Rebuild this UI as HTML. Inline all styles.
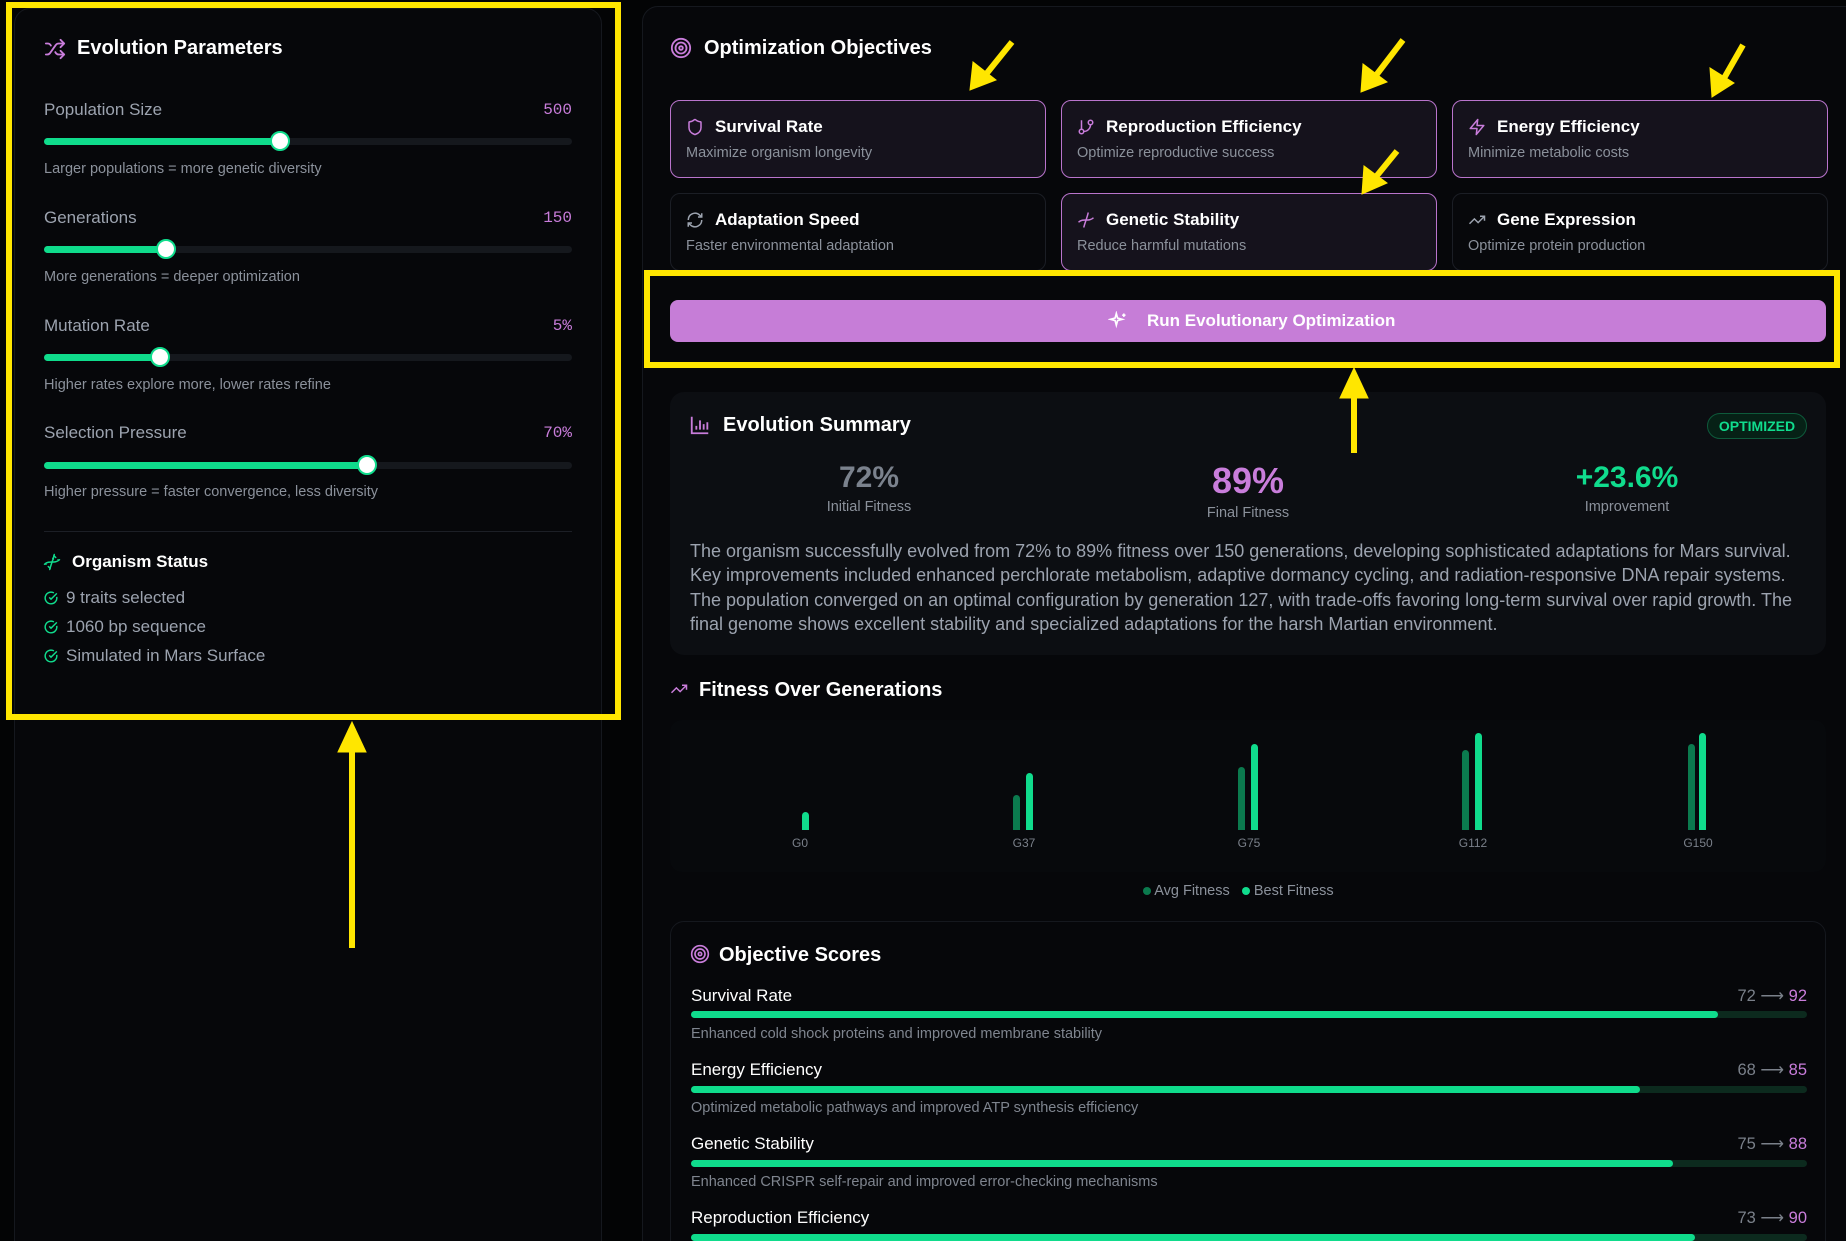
<!DOCTYPE html>
<html><head><meta charset="utf-8"><style>
*{margin:0;padding:0;box-sizing:border-box}
html,body{width:1846px;height:1241px;overflow:hidden}
body{background:#030405;font-family:"Liberation Sans",sans-serif;position:relative;color:#e5e7eb}
#wrap{position:absolute;left:0;top:0;width:1846px;height:1241px;overflow:hidden}
.a{position:absolute;white-space:nowrap}
.panel{position:absolute;background:#06070a;border:1px solid #15181e;border-radius:16px}
.t{font-weight:bold;color:#fff;font-size:20px;line-height:24px}
.lbl{color:#9ca3af;font-size:17px;line-height:20px}
.help{color:#8b919b;font-size:14.5px;line-height:18px}
.val{font-family:"Liberation Mono",monospace;color:#c97ddb;font-size:16px;line-height:20px;text-align:right}
.track{position:absolute;height:7px;border-radius:4px;background:#15181d}
.fill{position:absolute;left:0;top:0;height:7px;border-radius:4px;background:#0fdc8c}
.thumb{position:absolute;width:20px;height:20px;border-radius:50%;background:#fff;border:2px solid #0fdc8c;top:-7px}
.card{position:absolute;border-radius:10px;width:376px;height:78px;border:1px solid #1b1e25;background:#07080b}
.card.on{border:1.5px solid #b974cc;background:#15121c}
.card .ct{position:absolute;left:44px;top:16px;font-size:17px;font-weight:bold;color:#fff}
.card .cd{position:absolute;left:15px;top:44px;font-size:14.5px;color:#8b919b}
.card svg{position:absolute;left:15px;top:17px}
.y{position:absolute;border:6px solid #ffe600}
.bar{position:absolute;width:7px;border-radius:4px 4px 0 0}
.av{background:#0b7a4e}.bs{background:#10dc8d}
.gl{position:absolute;font-size:12px;color:#7a808a;text-align:center;width:60px}
.str{position:absolute;height:7px;border-radius:4px;background:#0c2a1e;left:691px;width:1116px}
.str div{height:7px;border-radius:4px;background:#0fdc8c}
.sl{font-size:17px;color:#fff;left:691px}
.sd{font-size:14.5px;color:#7f858f;left:691px}
.sv{font-size:16.5px;color:#7a808a;right:39px}
.sv b{font-weight:normal;color:#c97ddb}
.ck{display:inline-block;vertical-align:-2px;margin-right:8px}
</style></head><body><div id="wrap">

<div class="panel" style="left:14px;top:8px;width:588px;height:1260px"></div>
<svg class="a" style="left:43px;top:38px" width="24" height="22" viewBox="0 0 24 24" fill="none" stroke="#c97ddb" stroke-width="2" stroke-linecap="round" stroke-linejoin="round"><path d="M2 18h1.4c1.3 0 2.5-.6 3.3-1.7l6.1-8.6c.7-1.1 2-1.7 3.3-1.7H22"/><path d="m18 2 4 4-4 4"/><path d="M2 6h1.9c1.5 0 2.9.9 3.6 2.2"/><path d="M22 18h-5.9c-1.3 0-2.6-.7-3.3-1.8l-.5-.8"/><path d="m18 14 4 4-4 4"/></svg>
<div class="a t" style="left:77px;top:36px">Evolution Parameters</div>

<div class="a lbl" style="left:44px;top:100px">Population Size</div>
<div class="a val" style="right:1274px;top:100px">500</div>
<div class="track" style="left:44px;top:138px;width:528px"><div class="fill" style="width:236px"></div><div class="thumb" style="left:226px"></div></div>
<div class="a help" style="left:44px;top:160px">Larger populations = more genetic diversity</div>

<div class="a lbl" style="left:44px;top:208px">Generations</div>
<div class="a val" style="right:1274px;top:208px">150</div>
<div class="track" style="left:44px;top:246px;width:528px"><div class="fill" style="width:122px"></div><div class="thumb" style="left:112px"></div></div>
<div class="a help" style="left:44px;top:268px">More generations = deeper optimization</div>

<div class="a lbl" style="left:44px;top:316px">Mutation Rate</div>
<div class="a val" style="right:1274px;top:316px">5%</div>
<div class="track" style="left:44px;top:354px;width:528px"><div class="fill" style="width:116px"></div><div class="thumb" style="left:106px"></div></div>
<div class="a help" style="left:44px;top:376px">Higher rates explore more, lower rates refine</div>

<div class="a lbl" style="left:44px;top:423px">Selection Pressure</div>
<div class="a val" style="right:1274px;top:423px">70%</div>
<div class="track" style="left:44px;top:462px;width:528px"><div class="fill" style="width:323px"></div><div class="thumb" style="left:313px"></div></div>
<div class="a help" style="left:44px;top:483px">Higher pressure = faster convergence, less diversity</div>

<div class="a" style="left:44px;top:531px;width:528px;height:1px;background:#1c1f26"></div>
<svg class="a" style="left:43px;top:553px" width="18" height="18" viewBox="0 0 24 24" fill="none" stroke="#10dc8d" stroke-width="2" stroke-linecap="round"><path d="M2 15c6.7-6 13.3 0 20-6"/><path d="M9 22c1.8-7 4.5-13 6-20"/><path d="m17 6-2.5-2.5M14 8l-1-1M7 18l2.5 2.5M3.5 14.5l.5.5M20 9l.5.5"/></svg>
<div class="a" style="left:72px;top:552px;font-size:17px;font-weight:bold;color:#fff">Organism Status</div>
<div class="a" style="left:44px;top:583px;font-size:17px;color:#9ca3af;line-height:29px">
<div><svg class="ck" width="14" height="14" viewBox="0 0 24 24" fill="none" stroke="#10dc8d" stroke-width="2.5"><path d="M21.8 10A10 10 0 1 1 17 3.3"/><path d="m9 11 3 3L22 4"/></svg>9 traits selected</div>
<div><svg class="ck" width="14" height="14" viewBox="0 0 24 24" fill="none" stroke="#10dc8d" stroke-width="2.5"><path d="M21.8 10A10 10 0 1 1 17 3.3"/><path d="m9 11 3 3L22 4"/></svg>1060 bp sequence</div>
<div><svg class="ck" width="14" height="14" viewBox="0 0 24 24" fill="none" stroke="#10dc8d" stroke-width="2.5"><path d="M21.8 10A10 10 0 1 1 17 3.3"/><path d="m9 11 3 3L22 4"/></svg>Simulated in Mars Surface</div>
</div>

<div class="panel" style="left:642px;top:6px;width:1230px;height:1270px"></div>
<svg class="a" style="left:670px;top:37px" width="22" height="22" viewBox="0 0 24 24" fill="none" stroke="#c97ddb" stroke-width="2"><circle cx="12" cy="12" r="10"/><circle cx="12" cy="12" r="6"/><circle cx="12" cy="12" r="2"/></svg>
<div class="a t" style="left:704px;top:36px">Optimization Objectives</div>

<div class="card on" style="left:670px;top:100px"><svg width="18" height="18" viewBox="0 0 24 24" fill="none" stroke="#c97ddb" stroke-width="2"><path d="M20 13c0 5-3.5 7.5-7.7 9a1 1 0 0 1-.7 0C7.5 20.5 4 18 4 13V6a1 1 0 0 1 1-1c2 0 4.5-1.2 6.2-2.7a1.2 1.2 0 0 1 1.5 0C14.5 3.8 17 5 19 5a1 1 0 0 1 1 1z"/></svg><div class="ct">Survival Rate</div><div class="cd">Maximize organism longevity</div></div>
<div class="card on" style="left:1061px;top:100px"><svg width="18" height="18" viewBox="0 0 24 24" fill="none" stroke="#c97ddb" stroke-width="2"><path d="M6 3v12"/><circle cx="18" cy="6" r="3"/><circle cx="6" cy="18" r="3"/><path d="M18 9a9 9 0 0 1-9 9"/></svg><div class="ct">Reproduction Efficiency</div><div class="cd">Optimize reproductive success</div></div>
<div class="card on" style="left:1452px;top:100px"><svg width="18" height="18" viewBox="0 0 24 24" fill="none" stroke="#c97ddb" stroke-width="2" stroke-linejoin="round"><path d="M13 2 3 14h9l-1 8 10-12h-9z"/></svg><div class="ct">Energy Efficiency</div><div class="cd">Minimize metabolic costs</div></div>
<div class="card" style="left:670px;top:193px"><svg width="18" height="18" viewBox="0 0 24 24" fill="none" stroke="#9ca3af" stroke-width="2"><path d="M3 12a9 9 0 0 1 15-6.7L21 8M21 3v5h-5M21 12a9 9 0 0 1-15 6.7L3 16M8 16H3v5"/></svg><div class="ct">Adaptation Speed</div><div class="cd">Faster environmental adaptation</div></div>
<div class="card on" style="left:1061px;top:193px"><svg width="18" height="18" viewBox="0 0 24 24" fill="none" stroke="#c97ddb" stroke-width="2"><path d="M2 15c6.7-6 13.3 0 20-6"/><path d="M9 22c1.8-7 4.5-13 6-20"/></svg><div class="ct">Genetic Stability</div><div class="cd">Reduce harmful mutations</div></div>
<div class="card" style="left:1452px;top:193px"><svg width="18" height="18" viewBox="0 0 24 24" fill="none" stroke="#9ca3af" stroke-width="2"><path d="m22 7-8.5 8.5-5-5L2 17M16 7h6v6"/></svg><div class="ct">Gene Expression</div><div class="cd">Optimize protein production</div></div>

<div class="a" style="left:670px;top:300px;width:1156px;height:42px;border-radius:8px;background:#c67dd7"></div>
<svg class="a" style="left:1108px;top:311px" width="20" height="20" viewBox="0 0 24 24" fill="none" stroke="#fff" stroke-width="2"><path d="M10 3 8.5 8.5 3 10l5.5 1.5L10 17l1.5-5.5L17 10l-5.5-1.5z"/><path d="M19 3v4M17 5h4"/></svg>
<div class="a" style="left:1147px;top:311px;font-size:17px;font-weight:bold;color:#fff">Run Evolutionary Optimization</div>

<div class="a" style="left:670px;top:392px;width:1156px;height:263px;border-radius:14px;background:#0c0e12"></div>
<svg class="a" style="left:689px;top:414px" width="22" height="22" viewBox="0 0 24 24" fill="none" stroke="#c97ddb" stroke-width="2"><path d="M3 3v18h18M8 17v-4M12 17V7M16 17v-6M20 17V9"/></svg>
<div class="a t" style="left:723px;top:413px">Evolution Summary</div>
<div class="a" style="left:1707px;top:413px;width:100px;height:26px;border-radius:13px;border:1px solid #0e5a3b;background:#062116;color:#10dc8d;font-size:14px;font-weight:bold;text-align:center;line-height:24px">OPTIMIZED</div>
<div class="a" style="left:769px;width:200px;text-align:center;top:461px;font-size:30px;font-weight:bold;color:#7b828d">72%</div>
<div class="a" style="left:769px;width:200px;text-align:center;top:499px;font-size:14.5px;color:#8b919b">Initial Fitness</div>
<div class="a" style="left:1148px;width:200px;text-align:center;top:460px;font-size:36px;font-weight:bold;color:#c97ddb">89%</div>
<div class="a" style="left:1148px;width:200px;text-align:center;top:505px;font-size:14.5px;color:#8b919b">Final Fitness</div>
<div class="a" style="left:1527px;width:200px;text-align:center;top:461px;font-size:30px;font-weight:bold;color:#10dc8d">+23.6%</div>
<div class="a" style="left:1527px;width:200px;text-align:center;top:499px;font-size:14.5px;color:#8b919b">Improvement</div>
<div class="a" style="left:690px;top:539px;font-size:18px;line-height:24.3px;color:#9ca3af">The organism successfully evolved from 72% to 89% fitness over 150 generations, developing sophisticated adaptations for Mars survival.<br>Key improvements included enhanced perchlorate metabolism, adaptive dormancy cycling, and radiation-responsive DNA repair systems.<br>The population converged on an optimal configuration by generation 127, with trade-offs favoring long-term survival over rapid growth. The<br>final genome shows excellent stability and specialized adaptations for the harsh Martian environment.</div>

<svg class="a" style="left:670px;top:680px" width="18" height="18" viewBox="0 0 24 24" fill="none" stroke="#c97ddb" stroke-width="2"><path d="m22 7-8.5 8.5-5-5L2 17M16 7h6v6"/></svg>
<div class="a t" style="left:699px;top:678px">Fitness Over Generations</div>
<div class="a" style="left:670px;top:720px;width:1156px;height:152px;border-radius:12px;background:#07090c"></div>
<div class="bar bs" style="left:802px;top:812px;height:18px"></div>
<div class="bar av" style="left:1013px;top:795px;height:35px"></div><div class="bar bs" style="left:1026px;top:773px;height:57px"></div>
<div class="bar av" style="left:1238px;top:767px;height:63px"></div><div class="bar bs" style="left:1251px;top:744px;height:86px"></div>
<div class="bar av" style="left:1462px;top:750px;height:80px"></div><div class="bar bs" style="left:1475px;top:733px;height:97px"></div>
<div class="bar av" style="left:1688px;top:744px;height:86px"></div><div class="bar bs" style="left:1699px;top:733px;height:97px"></div>
<div class="gl" style="left:770px;top:836px">G0</div>
<div class="gl" style="left:994px;top:836px">G37</div>
<div class="gl" style="left:1219px;top:836px">G75</div>
<div class="gl" style="left:1443px;top:836px">G112</div>
<div class="gl" style="left:1668px;top:836px">G150</div>
<div class="a" style="left:1143px;top:883px;font-size:14.5px;color:#8b919b"><span style="display:inline-block;width:8px;height:8px;border-radius:50%;background:#0b7a4e"></span> Avg Fitness &nbsp; <span style="display:inline-block;width:8px;height:8px;border-radius:50%;background:#10dc8d"></span> Best Fitness</div>

<div class="a" style="left:670px;top:921px;width:1156px;height:340px;border-radius:14px;border:1px solid #15181e;background:#06070a"></div>
<svg class="a" style="left:690px;top:944px" width="20" height="20" viewBox="0 0 24 24" fill="none" stroke="#c97ddb" stroke-width="2"><circle cx="12" cy="12" r="10"/><circle cx="12" cy="12" r="6"/><circle cx="12" cy="12" r="2"/></svg>
<div class="a t" style="left:719px;top:943px">Objective Scores</div>

<div class="a sl" style="top:986px">Survival Rate</div><div class="a sv" style="top:986px">72 ⟶ <b>92</b></div>
<div class="str" style="top:1011px"><div style="width:92%"></div></div>
<div class="a sd" style="top:1026px">Enhanced cold shock proteins and improved membrane stability</div>
<div class="a sl" style="top:1060px">Energy Efficiency</div><div class="a sv" style="top:1060px">68 ⟶ <b>85</b></div>
<div class="str" style="top:1086px"><div style="width:85%"></div></div>
<div class="a sd" style="top:1100px">Optimized metabolic pathways and improved ATP synthesis efficiency</div>
<div class="a sl" style="top:1134px">Genetic Stability</div><div class="a sv" style="top:1134px">75 ⟶ <b>88</b></div>
<div class="str" style="top:1160px"><div style="width:88%"></div></div>
<div class="a sd" style="top:1174px">Enhanced CRISPR self-repair and improved error-checking mechanisms</div>
<div class="a sl" style="top:1208px">Reproduction Efficiency</div><div class="a sv" style="top:1208px">73 ⟶ <b>90</b></div>
<div class="str" style="top:1234px"><div style="width:90%"></div></div>

<div class="y" style="left:6px;top:2px;width:615px;height:718px"></div>
<div class="y" style="left:644px;top:270px;width:1196px;height:98px"></div>
<svg class="a" style="left:0;top:0" width="1846" height="1241">
<g fill="#ffe600" stroke="#ffe600">
<line x1="352" y1="948" x2="352" y2="745" stroke-width="6"/><polygon points="338,752 352,722 366,752"/>
<line x1="1354" y1="453" x2="1354" y2="392" stroke-width="6"/><polygon points="1340,398 1354,368 1368,398"/>
<g stroke-width="6">
<line x1="1012" y1="42" x2="983" y2="78"/><line x1="1403" y1="40" x2="1374" y2="78"/><line x1="1743" y1="45" x2="1723" y2="80"/><line x1="1397" y1="151" x2="1375" y2="178"/></g>
<polygon points="970,90 973,62 996,80"/><polygon points="1361,92 1363,64 1387,82"/><polygon points="1712,97 1710,68 1734,83"/><polygon points="1362,194 1364,166 1387,183"/>
</g></svg>
</div></body></html>
